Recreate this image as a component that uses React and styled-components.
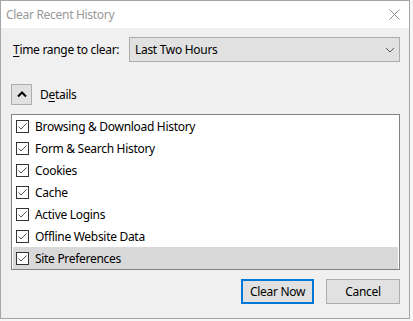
import React from 'react';
import styled, { createGlobalStyle } from 'styled-components';

const Global = createGlobalStyle`
  html, body {
    margin: 0;
    padding: 0;
    background: #f7f7f7;
  }
  body {
    font-family: "Noto Sans", "Open Sans", sans-serif;
    font-size: 12px;
    letter-spacing: -0.3px;
    color: #000;
  }
`;

const Window = styled.div`
  width: 410px;
  height: 319px;
  box-sizing: border-box;
  border: 1px solid #a6a6a6;
  background: #f0f0f0;
  display: flex;
  flex-direction: column;
`;

const TitleBar = styled.div`
  height: 27px;
  background: #fff;
  display: flex;
  align-items: center;
  justify-content: space-between;
  padding: 0 9px 0 5px;
`;

const Title = styled.span`
  color: #999;
  font-size: 12px;
`;

const Body = styled.div`
  flex: 1;
  display: flex;
  flex-direction: column;
  padding: 9px 9px 0 10px;
`;

const RangeRow = styled.div`
  display: flex;
  align-items: center;
`;

const Label = styled.label`
  width: 116px;
  padding-left: 2px;
`;

const Select = styled.div`
  flex: 1;
  height: 25px;
  box-sizing: border-box;
  border: 1px solid #adadad;
  background: #e1e1e1;
  display: flex;
  align-items: center;
  justify-content: space-between;
  padding: 0 4px 0 5px;
`;

const Key = styled.span`
  text-decoration: underline;
  text-underline-offset: 2px;
`;

const DetailsRow = styled.div`
  display: flex;
  align-items: center;
  gap: 8px;
  margin-top: 22px;
`;

const ToggleButton = styled.div`
  width: 21px;
  height: 21px;
  box-sizing: border-box;
  border: 1px solid #adadad;
  background: #e1e1e1;
  display: flex;
  align-items: center;
  justify-content: center;
`;

const List = styled.div`
  margin-top: 9px;
  height: 156px;
  box-sizing: border-box;
  border: 1px solid #828282;
  background: #fff;
  padding: 0 1px;
`;

const Row = styled.div`
  height: 22px;
  display: flex;
  align-items: center;
  gap: 6px;
  padding-left: 3px;
  background: ${p => (p.selected ? '#d9d9d9' : 'transparent')};
`;

const ButtonRow = styled.div`
  display: flex;
  justify-content: flex-end;
  gap: 12px;
  margin-top: 9px;
`;

const Button = styled.button`
  width: ${p => p.w}px;
  height: 25px;
  box-sizing: border-box;
  border: ${p => (p.primary ? '2px solid #0078d7' : '1px solid #adadad')};
  background: #e1e1e1;
  font: inherit;
  letter-spacing: inherit;
  color: #000;
  padding: 0;
`;

const Check = () => (
  <svg width="13" height="13" viewBox="0 0 13 13">
    <rect x="0.5" y="0.5" width="12" height="12" fill="#fff" stroke="#333" />
    <path d="M2.5 6.5 L5 9 L10.5 3.5" fill="none" stroke="#555" strokeWidth="1" />
  </svg>
);

const items = [
  'Browsing & Download History',
  'Form & Search History',
  'Cookies',
  'Cache',
  'Active Logins',
  'Offline Website Data',
  'Site Preferences',
];

export default function App() {
  return (
    <>
      <Global />
      <Window>
        <TitleBar>
          <Title>Clear Recent History</Title>
          <svg width="11" height="11" viewBox="0 0 11 11">
            <path d="M0.5 0.5 L10.5 10.5 M10.5 0.5 L0.5 10.5" stroke="#888" strokeWidth="1" />
          </svg>
        </TitleBar>
        <Body>
          <RangeRow>
            <Label><Key>T</Key>ime range to clear:</Label>
            <Select>
              <span>Last Two Hours</span>
              <svg width="10" height="6" viewBox="0 0 10 6">
                <path d="M1 1 L5 5 L9 1" fill="none" stroke="#555" strokeWidth="1" />
              </svg>
            </Select>
          </RangeRow>
          <DetailsRow>
            <ToggleButton>
              <svg width="10" height="7" viewBox="0 0 10 7">
                <path d="M1 5.5 L5 1.5 L9 5.5" fill="none" stroke="#000" strokeWidth="2" />
              </svg>
            </ToggleButton>
            <span>D<Key>e</Key>tails</span>
          </DetailsRow>
          <List>
            {items.map((t, i) => (
              <Row key={t} selected={i === items.length - 1}>
                <Check />
                <span>{t}</span>
              </Row>
            ))}
          </List>
          <ButtonRow>
            <Button primary w={73}>Clear Now</Button>
            <Button w={74}>Cancel</Button>
          </ButtonRow>
        </Body>
      </Window>
    </>
  );
}
